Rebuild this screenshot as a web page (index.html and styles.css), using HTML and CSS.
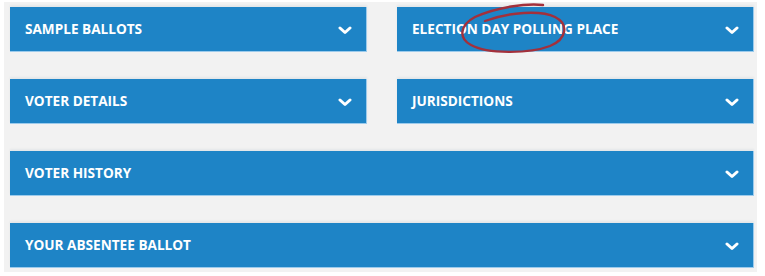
FILE: index.html
```html
<!DOCTYPE html>
<html lang="en">

<head>
    <meta charset="UTF-8" />
    <meta name="viewport" content="width=device-width, initial-scale=1.0" />
    <title>Voter Information</title>
    <link rel="stylesheet" href="styles.css">
</head>

<body>
    <div class="panel">
        <div class="accordion">
            <div class="acc-item">
                <span class="acc-title">Sample Ballots</span>
                <svg class="chevron" viewBox="0 0 14 9" width="14" height="9"><path d="M2 2 L7 6.5 L12 2" /></svg>
            </div>
            <div class="acc-item">
                <span class="acc-title">Election Day Polling Place</span>
                <svg class="chevron" viewBox="0 0 14 9" width="14" height="9"><path d="M2 2 L7 6.5 L12 2" /></svg>
                <!-- hand drawn mark over the title -->
                <svg class="scribble" viewBox="0 0 120 56" width="120" height="56">
                    <path d="M86 3 C70 1 40 5 18 15 C3 23 1 36 14 43 C30 52 72 52 93 44 C110 37 112 22 98 15 C84 8 52 10 28 19" />
                </svg>
            </div>
            <div class="acc-item">
                <span class="acc-title">Voter Details</span>
                <svg class="chevron" viewBox="0 0 14 9" width="14" height="9"><path d="M2 2 L7 6.5 L12 2" /></svg>
            </div>
            <div class="acc-item">
                <span class="acc-title">Jurisdictions</span>
                <svg class="chevron" viewBox="0 0 14 9" width="14" height="9"><path d="M2 2 L7 6.5 L12 2" /></svg>
            </div>
            <div class="acc-item wide">
                <span class="acc-title">Voter History</span>
                <svg class="chevron" viewBox="0 0 14 9" width="14" height="9"><path d="M2 2 L7 6.5 L12 2" /></svg>
            </div>
            <div class="acc-item wide">
                <span class="acc-title">Your Absentee Ballot</span>
                <svg class="chevron" viewBox="0 0 14 9" width="14" height="9"><path d="M2 2 L7 6.5 L12 2" /></svg>
            </div>
        </div>
    </div>
</body>

</html>
```

FILE: styles.css
```css
* {
    margin: 0;
    padding: 0;
    box-sizing: border-box;
}

body {
    background-color: #ffffff;
    font-family: 'Open Sans', 'Liberation Sans', sans-serif;
}

.panel {
    background-color: #f2f2f2;
    margin: 2px 8px 0 4px;
    padding: 5px 3px 4px 6px;
}

.accordion {
    display: grid;
    grid-template-columns: 357px 357px;
    column-gap: 30px;
    row-gap: 27px;
}

.acc-item {
    position: relative;
    height: 45px;
    background-color: #1e84c6;
    border-right: 1px solid #9ccbec;
    border-bottom: 1px solid #9ccbec;
    box-shadow: 0 -2px 2px rgba(20, 60, 100, 0.06);
    display: flex;
    align-items: center;
    justify-content: space-between;
    padding: 0 14px 0 15px;
    color: #ffffff;
}

.acc-item.wide {
    grid-column: 1 / 3;
}

.acc-title {
    font-size: 13.6px;
    font-weight: 700;
    text-transform: uppercase;
    margin-top: -2px;
}

.chevron {
    margin-top: 3px;
}

.chevron path {
    fill: none;
    stroke: #ffffff;
    stroke-width: 3;
    stroke-linecap: round;
    stroke-linejoin: round;
}

.scribble {
    position: absolute;
    left: 60px;
    top: -5px;
}

.scribble path {
    fill: none;
    stroke: #a3303b;
    stroke-width: 2.4;
    stroke-linecap: round;
}
```
